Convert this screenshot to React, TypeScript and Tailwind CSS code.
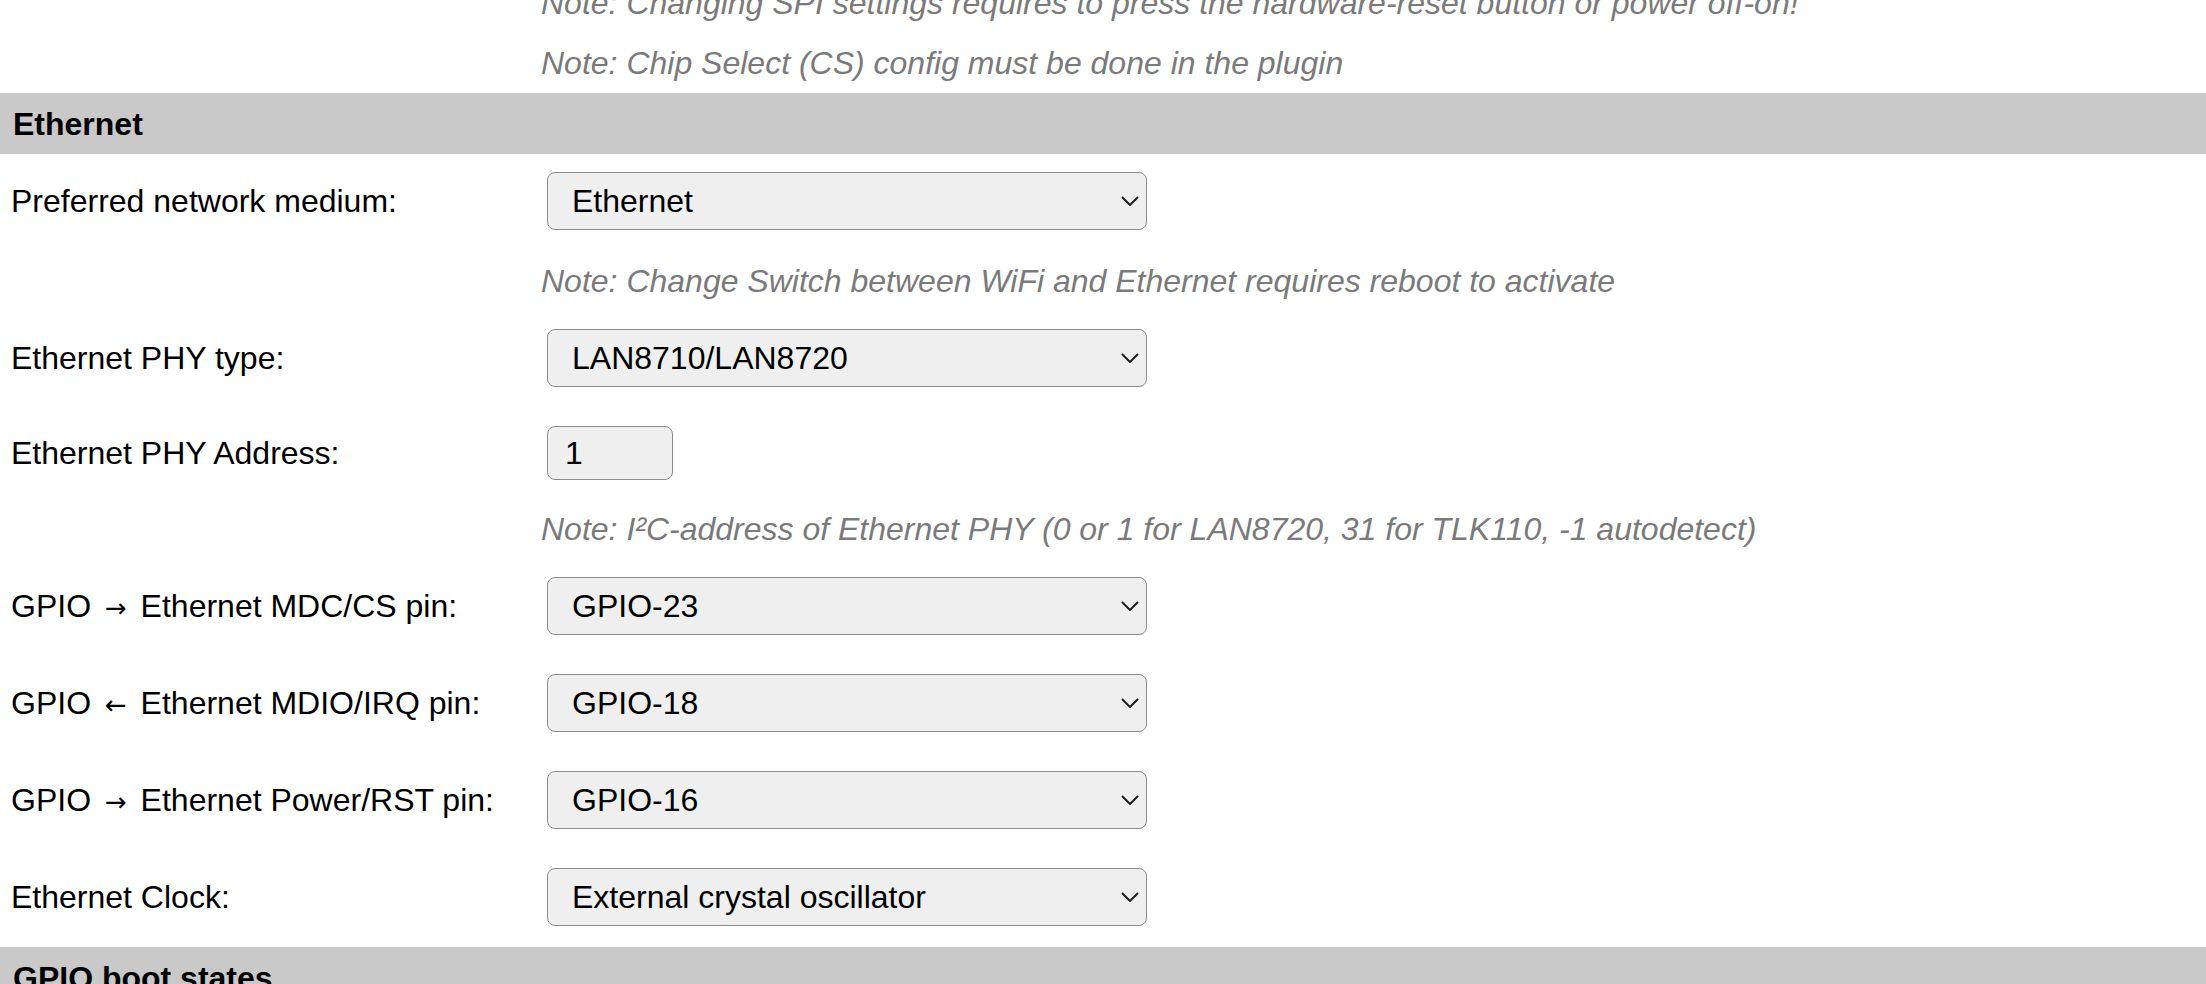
type Row =
  | { kind: "note"; text: string }
  | { kind: "header"; text: string }
  | { kind: "select"; label: React.ReactNode; value: string }
  | { kind: "input"; label: React.ReactNode; value: string };

// Arrow glyph: DejaVu draws a bigger, centred arrow like the reference
function Arrow({ glyph }: { glyph: string }) {
  return (
    <span className="px-[5px] font-['DejaVu_Sans',sans-serif] text-[26px]">
      {glyph}
    </span>
  );
}

const rows: Row[] = [
  {
    kind: "note",
    text: "Note: Changing SPI settings requires to press the hardware-reset button or power off-on!",
  },
  { kind: "note", text: "Note: Chip Select (CS) config must be done in the plugin" },
  { kind: "header", text: "Ethernet" },
  { kind: "select", label: "Preferred network medium:", value: "Ethernet" },
  {
    kind: "note",
    text: "Note: Change Switch between WiFi and Ethernet requires reboot to activate",
  },
  { kind: "select", label: "Ethernet PHY type:", value: "LAN8710/LAN8720" },
  { kind: "input", label: "Ethernet PHY Address:", value: "1" },
  {
    kind: "note",
    text: "Note: I²C-address of Ethernet PHY (0 or 1 for LAN8720, 31 for TLK110, -1 autodetect)",
  },
  {
    kind: "select",
    label: (
      <>
        GPIO <Arrow glyph="→" /> Ethernet MDC/CS pin:
      </>
    ),
    value: "GPIO-23",
  },
  {
    kind: "select",
    label: (
      <>
        GPIO <Arrow glyph="←" /> Ethernet MDIO/IRQ pin:
      </>
    ),
    value: "GPIO-18",
  },
  {
    kind: "select",
    label: (
      <>
        GPIO <Arrow glyph="→" /> Ethernet Power/RST pin:
      </>
    ),
    value: "GPIO-16",
  },
  { kind: "select", label: "Ethernet Clock:", value: "External crystal oscillator" },
  { kind: "header", text: "GPIO boot states" },
];

function Chevron() {
  return (
    <svg width="18" height="10" viewBox="0 0 18 10" fill="none">
      <path d="M1 1L9 9L17 1" stroke="#1f1f1f" strokeWidth="2" />
    </svg>
  );
}

function FormRow({ row }: { row: Row }) {
  if (row.kind === "note") {
    return (
      <div className="flex h-[60px] items-center pl-[541px] italic text-[#7a7a7a]">
        {row.text}
      </div>
    );
  }
  if (row.kind === "header") {
    return (
      <div className="flex h-[61px] items-center bg-[#c9c9c9] pl-[13px] font-bold">
        {row.text}
      </div>
    );
  }
  if (row.kind === "select") {
    return (
      <div className="flex items-center pt-[18px] pb-[21px]">
        <div className="w-[547px] pl-[11px]">{row.label}</div>
        <div className="flex h-[58px] w-[600px] items-center justify-between rounded-[8px] border-[1.5px] border-[#8c8c8c] bg-[#efefef] pr-[7px] pl-[24px]">
          <span>{row.value}</span>
          <Chevron />
        </div>
      </div>
    );
  }
  return (
    <div className="flex items-center pt-[18px] pb-[19px]">
      <div className="w-[547px] pl-[11px]">{row.label}</div>
      <div className="flex h-[54px] w-[126px] items-center rounded-[8px] border-[1.5px] border-[#8c8c8c] bg-[#efefef] pl-[17px]">
        {row.value}
      </div>
    </div>
  );
}

export default function App() {
  return (
    <div className="h-[984px] overflow-hidden bg-white font-['Liberation_Sans',Arial,sans-serif] text-[32px] leading-none text-black">
      <div className="-mt-[27px]">
        {rows.map((row, i) => (
          <FormRow key={i} row={row} />
        ))}
      </div>
    </div>
  );
}
